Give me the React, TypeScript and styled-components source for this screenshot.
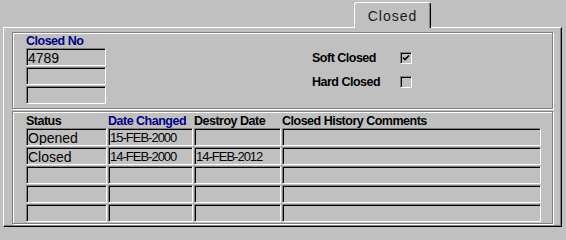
import styled, { createGlobalStyle } from 'styled-components';

const GlobalStyle = createGlobalStyle`
  html, body {
    margin: 0;
    padding: 0;
    background: #c0c0c0;
  }
  body {
    font-family: 'Liberation Sans', Arial, sans-serif;
    color: #000;
  }
`;

const Page = styled.div`
  width: 566px;
  height: 234px;
  background: #c0c0c0;
  overflow: hidden;
`;

const TabStrip = styled.div`
  height: 27px;
  display: flex;
  justify-content: flex-end;
  align-items: flex-end;
  padding-right: 135px;
`;

const Tab = styled.div`
  position: relative;
  z-index: 1;
  width: 75px;
  height: 25px;
  margin-bottom: -1px;
  background: #c0c0c0;
  border-top: 1px solid #fff;
  border-left: 1px solid #fff;
  border-right: 1px solid #000;
  border-radius: 3px 3px 0 0;
  box-shadow: inset -1px 0 0 #808080;
  display: flex;
  align-items: center;
  justify-content: center;
  font-size: 14px;
  letter-spacing: 1px;
  color: #1a1a1a;
`;

const Panel = styled.div`
  margin-left: 3px;
  width: 549px;
  height: 194px;
  border-top: 1px solid #fff;
  border-left: 1px solid #fff;
  border-right: 1px solid #000;
  border-bottom: 1px solid #000;
  box-shadow: inset -1px -1px 0 #808080;
  padding: 4px 0 0 8px;
  display: flex;
  flex-direction: column;
  gap: 2px;
`;

const GroupBox = styled.div<{ h: number }>`
  flex: none;
  width: 541px;
  height: ${(p) => p.h}px;
  border: 1px solid #808080;
  box-shadow: 1px 1px 0 #fff, inset 1px 1px 0 #fff;
  padding-left: 13px;
  box-sizing: border-box;
`;

const TopRow = styled.div`
  display: flex;
  padding-top: 2px;
`;

const Column = styled.div`
  display: flex;
  flex-direction: column;
  gap: 1px;
  width: 80px;
`;

const Label = styled.div<{ accent?: boolean }>`
  font-size: 12.5px;
  font-weight: bold;
  line-height: 12px;
  height: 12px;
  letter-spacing: -0.5px;
  white-space: nowrap;
  color: ${(p) => (p.accent ? '#000080' : '#000')};
`;

const Field = styled.div<{ narrow?: boolean }>`
  height: 18px;
  box-sizing: border-box;
  border-style: solid;
  border-width: 1px;
  border-color: #808080 #fff #fff #808080;
  box-shadow: inset 1px 1px 0 #000;
  padding: 1px 0 0 1px;
  font-size: ${(p) => (p.narrow ? '13px' : '14px')};
  line-height: 16px;
  letter-spacing: ${(p) => (p.narrow ? '-1px' : '0')};
  white-space: nowrap;
  overflow: hidden;
`;

const Checks = styled.div`
  margin-left: 206px;
  margin-top: 11px;
  display: grid;
  grid-template-columns: 88px 12px;
  grid-auto-rows: 24px;
  align-items: center;
`;

const CheckBox = styled.div`
  width: 12px;
  height: 12px;
  box-sizing: border-box;
  border-style: solid;
  border-width: 1px;
  border-color: #808080 #fff #fff #808080;
  box-shadow: inset 1px 1px 0 #000;
  display: flex;
  align-items: center;
  justify-content: center;
`;

const Grid = styled.div`
  display: grid;
  grid-template-columns: 81px 85px 87px 259px;
  column-gap: 1px;
  row-gap: 1px;
  padding-top: 3px;
`;

const Tick = () => (
  <svg width="8" height="8" viewBox="0 0 8 8">
    <path d="M1 3.5 L3 5.5 L7 1.5" stroke="#000" strokeWidth="1.6" fill="none" />
  </svg>
);

const rows: [string, string, string, string][] = [
  ['Opened', '15-FEB-2000', '', ''],
  ['Closed', '14-FEB-2000', '14-FEB-2012', ''],
  ['', '', '', ''],
  ['', '', '', ''],
  ['', '', '', ''],
];

export default function App() {
  return (
    <Page>
      <GlobalStyle />
      <TabStrip>
        <Tab>Closed</Tab>
      </TabStrip>
      <Panel>
        <GroupBox h={77}>
          <TopRow>
            <Column>
              <Label accent>Closed No</Label>
              <Field>4789</Field>
              <Field />
              <Field />
            </Column>
            <Checks>
              <Label>Soft Closed</Label>
              <CheckBox>
                <Tick />
              </CheckBox>
              <Label>Hard Closed</Label>
              <CheckBox />
            </Checks>
          </TopRow>
        </GroupBox>
        <GroupBox h={113}>
          <Grid>
            <Label>Status</Label>
            <Label accent>Date Changed</Label>
            <Label>Destroy Date</Label>
            <Label>Closed History Comments</Label>
            {rows.map((r, i) =>
              r.map((v, j) => (
                <Field key={`${i}-${j}`} narrow={j === 1 || j === 2}>
                  {v}
                </Field>
              ))
            )}
          </Grid>
        </GroupBox>
      </Panel>
    </Page>
  );
}
